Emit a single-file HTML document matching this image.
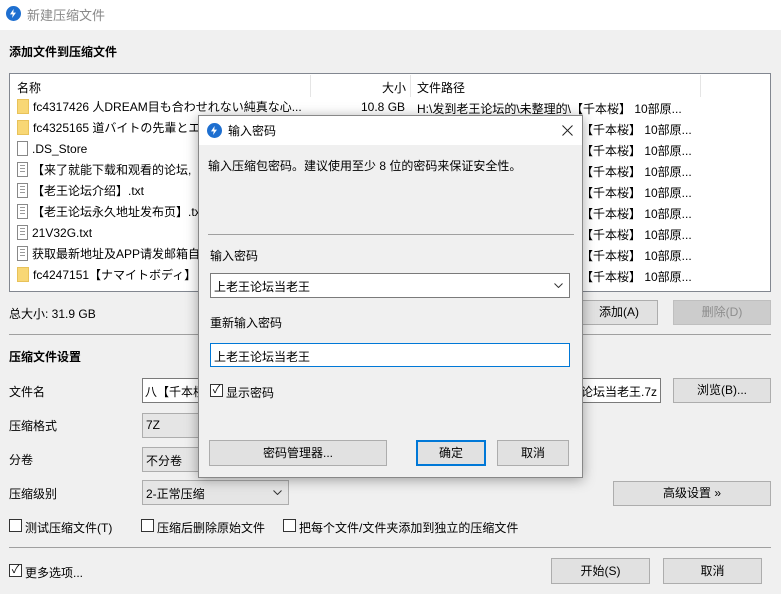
<!DOCTYPE html>
<html><head><meta charset="utf-8">
<style>
*{box-sizing:border-box;margin:0;padding:0}
body{width:781px;height:594px;background:#f0f0f0;font-family:"Liberation Sans","Noto Sans CJK SC",sans-serif;font-size:12px;color:#000;position:relative;overflow:hidden}
.a{position:absolute;white-space:nowrap}
.btn{position:absolute;background:#e1e1e1;border:1px solid #adadad;text-align:center;font-size:12px}
.inp{position:absolute;background:#fff;border:1px solid #7a7a7a;overflow:hidden;white-space:nowrap}
.cb{position:absolute;width:13px;height:13px;border:1px solid #333;background:#fff}
.row{position:absolute;left:17px;height:21px;line-height:21px}
.fold{display:inline-block;width:12px;height:15px;background:#f8d775;border:1px solid #e8c25a;vertical-align:-3px;margin-right:4px}
.doc{display:inline-block;width:11px;height:15px;background:#fff;border:1px solid #888;vertical-align:-3px;margin-right:4px;background-image:repeating-linear-gradient(#fff 0 2px,#999 2px 3px);background-clip:content-box;padding:2px 2px}
.plain{background-image:none}
.ico{position:absolute;width:15px;height:15px;border-radius:50%;background:#1e6fd0}
.ico:after{content:"";position:absolute;left:4px;top:3px;width:6px;height:9px;background:#fff;clip-path:polygon(60% 0,0 60%,45% 60%,35% 100%,100% 40%,55% 40%)}
.chev{position:absolute;right:6px;top:9px}
</style></head><body>
<div class="a" style="left:0;top:0;width:781px;height:30px;background:#fff"></div>
<div class="ico" style="left:6px;top:6px"></div>
<div class="a" style="left:27px;top:5px;font-size:13px;color:#888">新建压缩文件</div>
<div class="a" style="left:9px;top:43px;font-weight:bold;font-size:12px">添加文件到压缩文件</div>

<div class="a" style="left:9px;top:73px;width:762px;height:219px;background:#fff;border:1px solid #828790"></div>
<div class="a" style="left:17px;top:79px">名称</div>
<div class="a" style="left:310px;top:75px;width:1px;height:22px;background:#e5e5e5"></div>
<div class="a" style="left:382px;top:79px">大小</div>
<div class="a" style="left:410px;top:75px;width:1px;height:22px;background:#e5e5e5"></div>
<div class="a" style="left:417px;top:79px">文件路径</div>
<div class="a" style="left:700px;top:75px;width:1px;height:22px;background:#e5e5e5"></div>

<div class="row" style="top:97px"><span class="fold"></span>fc4317426 人DREAM目も合わせれない純真な心...</div>
<div class="a" style="left:361px;top:100px">10.8 GB</div>
<div class="a" style="left:417px;top:100px">H:\发到老王论坛的\未整理的\【千本桜】 10部原...</div>
<div class="row" style="top:118px"><span class="fold"></span>fc4325165 道バイトの先輩とエ</div>
<div class="row" style="top:139px"><span class="doc plain"></span>.DS_Store</div>
<div class="row" style="top:160px"><span class="doc"></span>【来了就能下载和观看的论坛,</div>
<div class="row" style="top:181px"><span class="doc"></span>【老王论坛介绍】.txt</div>
<div class="row" style="top:202px"><span class="doc"></span>【老王论坛永久地址发布页】.txt</div>
<div class="row" style="top:223px"><span class="doc"></span>21V32G.txt</div>
<div class="row" style="top:244px"><span class="doc"></span>获取最新地址及APP请发邮箱自</div>
<div class="row" style="top:265px"><span class="fold"></span>fc4247151【ナマイトボディ】</div>
<div class="a" style="left:581px;top:120px;line-height:21px">【千本桜】 10部原...<br>【千本桜】 10部原...<br>【千本桜】 10部原...<br>【千本桜】 10部原...<br>【千本桜】 10部原...<br>【千本桜】 10部原...<br>【千本桜】 10部原...<br>【千本桜】 10部原...</div>

<div class="a" style="left:9px;top:305px">总大小: 31.9 GB</div>
<div class="btn" style="left:580px;top:300px;width:78px;height:25px;line-height:23px">添加(A)</div>
<div class="btn" style="left:673px;top:300px;width:98px;height:25px;line-height:23px;background:#ccc;border-color:#bfbfbf;color:#8d8d8d">删除(D)</div>
<div class="a" style="left:9px;top:334px;width:762px;height:1px;background:#a0a0a0"></div>
<div class="a" style="left:9px;top:348px;font-weight:bold">压缩文件设置</div>
<div class="a" style="left:9px;top:383px">文件名</div>
<div class="inp" style="left:142px;top:378px;width:519px;height:25px;padding:4px 2px">八【千本桜】 10部原始文件 上老王论坛当老王.7z<span style="position:absolute;right:3px;top:4px">论坛当老王.7z</span></div>
<div class="btn" style="left:673px;top:378px;width:98px;height:25px;line-height:23px">浏览(B)...</div>
<div class="a" style="left:9px;top:417px">压缩格式</div>
<div class="inp" style="left:142px;top:413px;width:70px;height:25px;padding:4px 3px;background:#e5e5e5;border-color:#adadad">7Z</div>
<div class="a" style="left:9px;top:451px">分卷</div>
<div class="inp" style="left:142px;top:447px;width:70px;height:25px;padding:4px 3px;background:#e5e5e5;border-color:#adadad">不分卷</div>
<div class="a" style="left:9px;top:485px">压缩级别</div>
<div class="inp" style="left:142px;top:480px;width:147px;height:25px;padding:4px 3px;background:#e5e5e5;border-color:#adadad">2-正常压缩<svg class="chev" width="9" height="5"><path d="M0.5 0.5L4.5 4.5L8.5 0.5" stroke="#333" fill="none"/></svg></div>
<div class="btn" style="left:613px;top:481px;width:158px;height:25px;line-height:23px">高级设置 »</div>
<div class="cb" style="left:9px;top:519px"></div><div class="a" style="left:25px;top:519px">测试压缩文件(T)</div>
<div class="cb" style="left:141px;top:519px"></div><div class="a" style="left:157px;top:519px">压缩后删除原始文件</div>
<div class="cb" style="left:283px;top:519px"></div><div class="a" style="left:299px;top:519px">把每个文件/文件夹添加到独立的压缩文件</div>
<div class="a" style="left:9px;top:547px;width:762px;height:1px;background:#a0a0a0"></div>
<div class="cb" style="left:9px;top:564px;font-size:11px;line-height:11px;text-align:center">✓</div><div class="a" style="left:25px;top:564px">更多选项...</div>
<div class="btn" style="left:551px;top:558px;width:99px;height:26px;line-height:24px">开始(S)</div>
<div class="btn" style="left:663px;top:558px;width:99px;height:26px;line-height:24px">取消</div>

<!-- dialog -->
<div class="a" style="left:198px;top:115px;width:385px;height:363px;background:#f0f0f0;border:1px solid #888;box-shadow:0 2px 12px rgba(0,0,0,.35)"></div>
<div class="a" style="left:199px;top:116px;width:383px;height:29px;background:#fff"></div>
<div class="ico" style="left:207px;top:123px"></div>
<div class="a" style="left:228px;top:122px;font-size:12px">输入密码</div>
<svg class="a" style="left:562px;top:125px" width="11" height="11"><path d="M0.5 0.5L10.5 10.5M10.5 0.5L0.5 10.5" stroke="#222" stroke-width="1"/></svg>
<div class="a" style="left:208px;top:157px">输入压缩包密码。建议使用至少 8 位的密码来保证安全性。</div>
<div class="a" style="left:208px;top:234px;width:366px;height:1px;background:#a0a0a0"></div>
<div class="a" style="left:210px;top:247px">输入密码</div>
<div class="inp" style="left:210px;top:273px;width:360px;height:25px;padding:4px 3px">上老王论坛当老王<svg class="chev" width="9" height="5"><path d="M0.5 0.5L4.5 4.5L8.5 0.5" stroke="#333" fill="none"/></svg></div>
<div class="a" style="left:210px;top:314px">重新输入密码</div>
<div class="inp" style="left:210px;top:343px;width:360px;height:24px;padding:4px 3px;border-color:#0078d7">上老王论坛当老王</div>
<div class="cb" style="left:210px;top:384px;font-size:11px;line-height:11px;text-align:center">✓</div><div class="a" style="left:226px;top:384px">显示密码</div>
<div class="btn" style="left:209px;top:440px;width:178px;height:26px;line-height:24px">密码管理器...</div>
<div class="btn" style="left:416px;top:440px;width:70px;height:26px;line-height:22px;border:2px solid #0078d7">确定</div>
<div class="btn" style="left:497px;top:440px;width:72px;height:26px;line-height:24px">取消</div>
</body></html>
